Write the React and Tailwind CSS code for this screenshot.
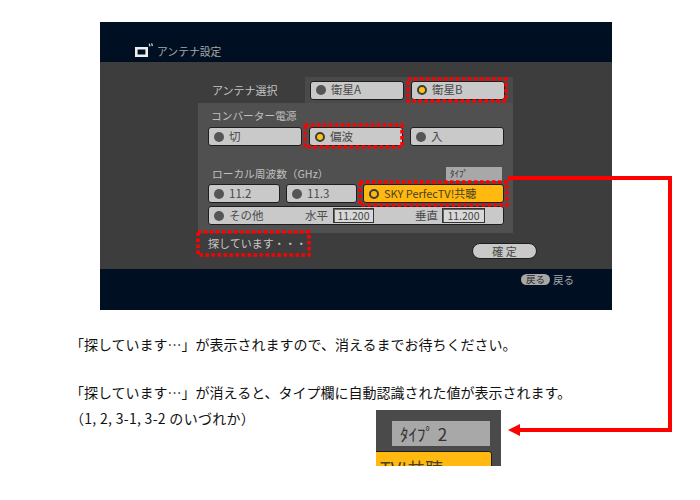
import React from 'react'

const font = "font-['Noto_Sans_CJK_JP','Liberation_Sans',sans-serif]"

// dotted red frame that sits over a control
const Dots = ({ w, h, className }) => (
    <svg className={`absolute ${className}`} width={w} height={h}>
        <rect x="2" y="2" width={w - 4} height={h - 4} fill="none" stroke="#ff0000" strokeWidth="3.5" strokeDasharray="3.5 2.5" />
    </svg>
)

const Radio = ({ on, hollow }) => {
    if (hollow) return <span className="w-[10px] h-[10px] rounded-full border-[2px] border-[#3c3c3c] bg-[#ffb911] shrink-0"></span>
    if (on) return <span className="w-[10px] h-[10px] rounded-full border-[2px] border-[#3c3c3c] bg-[#ffc20e] shrink-0"></span>
    return <span className="w-[10px] h-[10px] rounded-full bg-[#555555] shrink-0"></span>
}

const Btn = ({ label, on, className }) => (
    <div className={`h-[19px] flex items-center gap-[5px] pl-[5px] rounded-[3px] border border-[#1e1e1e] bg-[#c9c9c9] text-[11.5px] text-[#4a4a4a] ${className}`}>
        <Radio on={on} />
        <span>{label}</span>
    </div>
)

const FreqInput = ({ value, className }) => (
    <span className={`h-[15px] flex items-center justify-center border border-[#333333] bg-[#d8d8d8] text-[10.5px] text-[#444444] shadow-[inset_1px_1px_0_#666666] ${className}`}>{value}</span>
)

const SettingsScreen = () => (
    <div className={`ml-[100px] w-[512px] h-[288px] flex flex-col ${font}`}>
        <div className="h-[40px] bg-[#000f22] flex items-end pl-[35px] pb-[3px] gap-[4px]">
            <svg width="18" height="15" viewBox="0 0 18 15" className="mb-[1px]">
                <path d="M1.3 5.3h10.4v7.4H1.3z" fill="none" stroke="#eeeeee" strokeWidth="2.6" />
                <path d="M14.2 0.8l0.8 2.6M16.6 0.4l0.8 2.6" stroke="#dddddd" strokeWidth="1.2" />
            </svg>
            <span className="text-[10.8px] leading-[16px] text-[#a8a8a8]">アンテナ設定</span>
        </div>

        <div className="h-[207px] bg-[#3d3d3d] pl-[98px] pt-[15px] flex flex-col">
            <div className="w-[315px] h-[26px] flex items-center">
                <span className="w-[107px] pl-[14px] text-[11px] text-[#c4c4c4]">アンテナ選択</span>
                <div className="w-[208px] h-[26px] bg-[#4a4a4a] flex items-center pl-[5px]">
                    <Btn label="衛星A" className="w-[94px]" />
                    <div className="relative ml-[7px] w-[94px]">
                        <Btn label="衛星B" on />
                        <Dots w={102} h={26} className="-left-[5px] -top-[4px]" />
                    </div>
                </div>
            </div>

            <div className="w-[315px] h-[130px] bg-[#505050] pl-[10px] pt-[6px] flex flex-col">
                <span className="h-[14px] pl-[3px] leading-[14px] text-[10.7px] text-[#c0c0c0]">コンバーター電源</span>
                <div className="mt-[4px] flex gap-[7px]">
                    <Btn label="切" className="w-[94px]" />
                    <div className="relative w-[94px]">
                        <Btn label="偏波" on />
                        <Dots w={101} h={26} className="-left-[6px] -top-[4px]" />
                    </div>
                    <Btn label="入" className="w-[94px]" />
                </div>

                <div className="mt-[21px] h-[14px] flex items-center justify-between">
                    <span className="pl-[4px] text-[10.7px] text-[#c0c0c0]">ローカル周波数（GHz）</span>
                    <span className="w-[56px] h-[14px] mr-[11px] pl-[4px] bg-[#a8a8a8] text-[9px] leading-[14px] text-[#333333]">ﾀｲﾌﾟ</span>
                </div>
                <div className="mt-[3px] flex gap-[6px]">
                    <Btn label="11.2" className="w-[72px]" />
                    <Btn label="11.3" className="w-[71px]" />
                    <div className="relative w-[141px]">
                        <div className="h-[19px] flex items-center gap-[5px] pl-[5px] rounded-[3px] border border-[#1e1e1e] bg-[#ffb911] text-[11px] text-[#4a4020] whitespace-nowrap">
                            <Radio hollow />
                            <span>SKY PerfecTV!共聴</span>
                        </div>
                        <Dots w={151} h={27} className="-left-[5px] -top-[4px]" />
                    </div>
                </div>
                <div className="mt-[3px] w-[296px] h-[19px] flex items-center pl-[5px] rounded-[3px] border border-[#1e1e1e] bg-[#c9c9c9] text-[11.5px] text-[#4a4a4a]">
                    <Radio />
                    <span className="ml-[5px] w-[76px]">その他</span>
                    <span className="w-[28px]">水平</span>
                    <FreqInput value="11.200" className="w-[41px]" />
                    <span className="ml-[41px] w-[27px]">垂直</span>
                    <FreqInput value="11.200" className="w-[43px]" />
                </div>
            </div>

            <div className="w-[315px] flex items-start">
                <div className="relative -ml-[2px] -mt-[3px] w-[115px] h-[27px] shrink-0 flex items-center pl-[12px] text-[11px] text-[#c8c8c8] whitespace-nowrap">
                    <span>探しています・・・</span>
                    <Dots w={115} h={27} className="left-0 top-0" />
                </div>
                <div className="ml-[161px] mt-[10px] w-[65px] h-[16px] shrink-0 rounded-full border border-[#1e1e1e] bg-[#c9c9c9] flex items-center justify-center text-[11px] leading-none text-[#444444]">
                    確 定
                </div>
            </div>
        </div>

        <div className="h-[41px] bg-[#000f22] flex justify-end pt-[5px] pr-[38px] gap-[3px]">
            <span className="w-[29px] h-[11px] rounded-full bg-[#a8a8a8] flex items-center justify-center text-[9.5px] leading-none text-[#222222]">戻る</span>
            <span className="text-[10.5px] leading-[12px] text-[#a8a8a8]">戻る</span>
        </div>
    </div>
)

const App = () => {
    return (
        <div className="relative w-[700px] h-[500px] overflow-hidden bg-white pt-[22px] [text-spacing-trim:space-all]">
            <SettingsScreen />

            <div className={`ml-[70px] mt-[25px] text-[14px] leading-[18px] text-[#111111] ${font}`}>
                <p>「探しています…」が表示されますので、消えるまでお待ちください。</p>
                <p className="mt-[30px]">「探しています…」が消えると、タイプ欄に自動認識された値が表示されます。</p>
                <p className="mt-[8px] tracking-[0.3px]">（1, 2, 3-1, 3-2 のいづれか）</p>
            </div>

            <div className={`-mt-[17px] ml-[376px] w-[125px] h-[56px] bg-[#4a4a4a] overflow-hidden pt-[11px] ${font}`}>
                <div className="ml-[16px] w-[98px] h-[25px] bg-[#a8a8a8] pl-[8px] text-[17px] leading-[25px] text-[#333333] whitespace-pre">ﾀｲﾌﾟ 2</div>
                <div className="-ml-[4px] mt-[5px] w-[120px] h-[30px] bg-[#ffb911] border border-[#1e1e1e] rounded-[3px] pl-[7px] pt-[6px] text-[18px] leading-[20px] text-[#4a4020] whitespace-nowrap">TV!共聴</div>
            </div>

            {/* connector from the SKY button down to the type box */}
            <svg className="absolute left-0 top-0" width="700" height="500">
                <path d="M508 178H670V430H518" fill="none" stroke="#ff0000" strokeWidth="4" />
                <path d="M508 430l12-6v12z" fill="#ff0000" />
            </svg>
        </div>
    )
}

export default App
